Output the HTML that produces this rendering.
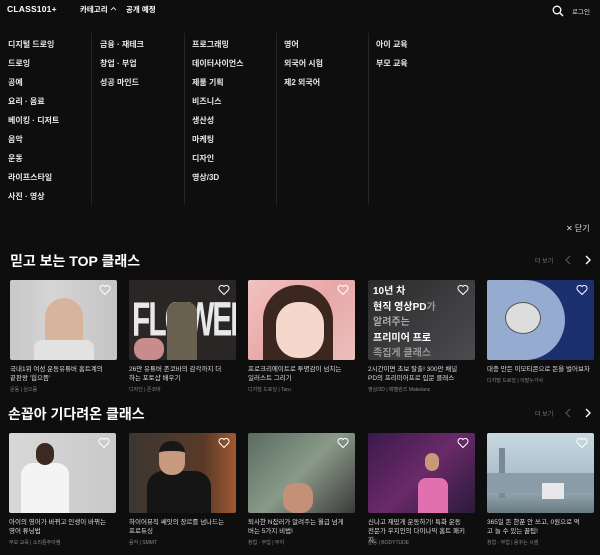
<!DOCTYPE html>
<html><head><meta charset="utf-8"><style>
*{margin:0;padding:0;box-sizing:border-box}
body{width:600px;height:555px;background:#0e0e0f;color:#fff;font-family:"Liberation Sans","Noto Sans CJK KR",sans-serif;position:relative;overflow:hidden}
.a{position:absolute;white-space:nowrap}
.m{font-size:8px;color:#e6e6e6;font-weight:bold}
.div{position:absolute;top:33px;height:172px;width:1px;background:#262628}
.h{font-size:14px;font-weight:bold}
.card{position:absolute;width:107px;height:80px;border-radius:2px;overflow:hidden}
.t{position:absolute;font-size:6.5px;color:#ddd;line-height:9px;width:98px;white-space:normal}
.s{position:absolute;font-size:5px;color:#888;white-space:nowrap}
</style></head><body>
<div class="a" style="left:7px;top:4px;font-size:8.5px;font-weight:bold;letter-spacing:0.2px">CLASS101+</div>
<div class="a" style="left:80px;top:4px;font-size:7.5px;font-weight:bold">카테고리</div>
<svg class="a" style="left:110px;top:6px" width="7" height="5"><path d="M1 4L3.5 1.5 6 4" stroke="#ddd" fill="none" stroke-width="0.9"/></svg>
<div class="a" style="left:126px;top:4px;font-size:7.5px;font-weight:bold">공개 예정</div>
<svg class="a" style="left:552px;top:5px" width="12" height="12" viewBox="0 0 12 12"><circle cx="5" cy="5" r="3.8" stroke="#fff" stroke-width="1.3" fill="none"/><path d="M8 8l3 3" stroke="#fff" stroke-width="1.4"/></svg>
<div class="a" style="left:572px;top:6px;font-size:6.5px;color:#ddd">로그인</div>

<div class="div" style="left:91px"></div><div class="div" style="left:184px"></div><div class="div" style="left:276px"></div><div class="div" style="left:368px"></div>

<div class="a m" style="left:8px;top:35px;line-height:19px">디지털 드로잉<br>드로잉<br>공예<br>요리 · 음료<br>베이킹 · 디저트<br>음악<br>운동<br>라이프스타일<br>사진 · 영상</div>
<div class="a m" style="left:100px;top:35px;line-height:19px">금융 · 재테크<br>창업 · 부업<br>성공 마인드</div>
<div class="a m" style="left:192px;top:35px;line-height:19px">프로그래밍<br>데이터사이언스<br>제품 기획<br>비즈니스<br>생산성<br>마케팅<br>디자인<br>영상/3D</div>
<div class="a m" style="left:284px;top:35px;line-height:19px">영어<br>외국어 시험<br>제2 외국어</div>
<div class="a m" style="left:376px;top:35px;line-height:19px">아이 교육<br>부모 교육</div>
<div class="a" style="left:566px;top:223px;font-size:8px;color:#ddd">✕ 닫기</div>

<div class="a h" style="left:10px;top:251px">믿고 보는 TOP 클래스</div>
<div class="a" style="left:535px;top:256px;font-size:6px;color:#777">더 보기</div>
<svg class="a" style="left:564px;top:255px" width="8" height="10"><path d="M6 1L2 5l4 4" stroke="#555" fill="none" stroke-width="1.2"/></svg>
<svg class="a" style="left:584px;top:255px" width="8" height="10"><path d="M2 1l4 4-4 4" stroke="#fff" fill="none" stroke-width="1.4"/></svg>

<div class="card" style="left:10px;top:280px;background:linear-gradient(90deg,#c8c8ca,#d6d4d4 40%,#c4c4c6)"><div style="position:absolute;left:35px;top:18px;width:38px;height:62px;background:#d9b49c;border-radius:19px 19px 4px 4px"></div><div style="position:absolute;left:24px;top:60px;width:60px;height:20px;background:#e2e2e2;border-radius:8px 8px 0 0"></div></div>
<div class="card" style="left:129px;top:280px;background:#2a2626"><div style="position:absolute;left:3px;top:14px;font:bold 30px 'Liberation Sans';color:#e8e8e8;letter-spacing:-2px;transform:scaleY(1.6);transform-origin:top left">FLOWER</div><div style="position:absolute;left:38px;top:22px;width:30px;height:58px;background:#6a6050;border-radius:10px 10px 0 0"></div><div style="position:absolute;left:5px;top:58px;width:30px;height:22px;background:#c88c8c;border-radius:10px"></div></div>
<div class="card" style="left:248px;top:280px;background:linear-gradient(135deg,#f2c3c0,#e8a8a8 50%,#e9c0bc)"><div style="position:absolute;left:15px;top:5px;width:70px;height:75px;background:#3c2620;border-radius:35px 35px 0 0"></div><div style="position:absolute;left:28px;top:22px;width:48px;height:56px;background:#f6d7cc;border-radius:22px"></div></div>
<div class="card" style="left:368px;top:280px;background:linear-gradient(135deg,#2c2a2a,#4b4b50)"><div style="position:absolute;left:5px;top:4px;font-size:10px;font-weight:bold;line-height:15.5px;color:#fff">10년 차<br>현직 영상PD<span style="color:#999">가</span><br><span style="color:#aaa">알려주는</span><br>프리미어 프로<br><span style="color:#999">족집게 클래스</span></div></div>
<div class="card" style="left:487px;top:280px;background:#1c2f6e"><div style="position:absolute;left:-30px;top:0;width:108px;height:80px;border-radius:0 40px 40px 0;background:#95acd0"></div><div style="position:absolute;left:18px;top:22px;width:36px;height:32px;background:#ddd;border-radius:50%;border:1px solid #555"></div></div>

<div class="t" style="left:10px;top:365px">국내1위 여성 운동유튜버 홈트계의 끝판왕 '힙으뜸'</div><div class="s" style="left:10px;top:386px">운동 | 심으뜸</div>
<div class="t" style="left:129px;top:365px">26만 유튜버 존코바의 감각까지 더하는 포토샵 배우기</div><div class="s" style="left:129px;top:386px">디자인 | 존코바</div>
<div class="t" style="left:248px;top:365px">프로크리에이트로 투명감이 넘치는 일러스트 그리기</div><div class="s" style="left:248px;top:386px">디지털 드로잉 | Taru</div>
<div class="t" style="left:368px;top:365px">2시간이면 초보 탈출! 300만 채널 PD의 프리미어프로 입문 클래스</div><div class="s" style="left:368px;top:386px">영상/3D | 메켈란즈 Makelanz</div>
<div class="t" style="left:487px;top:365px;width:110px">대충 만든 이모티콘으로 돈을 벌어보자</div><div class="s" style="left:487px;top:377px">디지털 드로잉 | 이말누가사</div>

<div class="a h" style="left:8px;top:404px">손꼽아 기다려온 클래스</div>
<div class="a" style="left:535px;top:409px;font-size:6px;color:#777">더 보기</div>
<svg class="a" style="left:564px;top:408px" width="8" height="10"><path d="M6 1L2 5l4 4" stroke="#555" fill="none" stroke-width="1.2"/></svg>
<svg class="a" style="left:584px;top:408px" width="8" height="10"><path d="M2 1l4 4-4 4" stroke="#fff" fill="none" stroke-width="1.4"/></svg>

<div class="card" style="left:9px;top:433px;background:linear-gradient(90deg,#d8d8d8,#c9c9c9)"><div style="position:absolute;left:12px;top:30px;width:48px;height:50px;background:#f4f4f4;border-radius:12px 12px 0 0"></div><div style="position:absolute;left:27px;top:10px;width:18px;height:22px;background:#3a2a22;border-radius:9px"></div></div>
<div class="card" style="left:129px;top:433px;background:linear-gradient(90deg,#3a3630,#5a3a28 70%,#a05a30)"><div style="position:absolute;left:18px;top:38px;width:64px;height:42px;background:#151515;border-radius:16px 16px 0 0"></div><div style="position:absolute;left:30px;top:8px;width:26px;height:34px;background:#c79a80;border-radius:12px;border-top:10px solid #181818"></div></div>
<div class="card" style="left:248px;top:433px;background:linear-gradient(135deg,#5a6a60,#8a9a88 50%,#3a3a3a)"><div style="position:absolute;left:35px;top:50px;width:30px;height:30px;background:#c49078;border-radius:12px"></div></div>
<div class="card" style="left:368px;top:433px;background:linear-gradient(135deg,#3a1a4a,#6a2a6a 50%,#2a1a3a)"><div style="position:absolute;left:50px;top:45px;width:30px;height:35px;background:#e070b0;border-radius:8px 8px 0 0"></div><div style="position:absolute;left:57px;top:20px;width:14px;height:18px;background:#c89878;border-radius:7px"></div></div>
<div class="card" style="left:487px;top:433px;background:linear-gradient(180deg,#c8d8e0,#a8bcc8 60%,#6a7a82)"><div style="position:absolute;left:12px;top:15px;width:6px;height:50px;background:#7a8a94"></div><div style="position:absolute;left:0;top:40px;width:107px;height:20px;background:#8a9ca8"></div><div style="position:absolute;left:55px;top:50px;width:22px;height:16px;background:#e8e8ea"></div></div>

<div class="t" style="left:9px;top:518px">아이의 영어가 바뀌고 인생이 바뀌는 영어 튜닝법</div><div class="s" style="left:9px;top:539px">부모 교육 | 소리튠주아쌤</div>
<div class="t" style="left:129px;top:518px">하이어뮤직 쎄잇의 장르를 넘나드는 프로듀싱</div><div class="s" style="left:129px;top:539px">음악 | SMMT</div>
<div class="t" style="left:248px;top:518px">퇴사한 N잡러가 알려주는 월급 넘게 버는 5가지 비법!</div><div class="s" style="left:248px;top:539px">창업 · 부업 | 부지</div>
<div class="t" style="left:368px;top:518px">신나고 재밌게 운동하기! 특화 운동 전문가 우지인의 다이나믹 홈트 패키지</div><div class="s" style="left:368px;top:539px">운동 | BODYTUDE</div>
<div class="t" style="left:487px;top:518px">365일 돈 한푼 안 쓰고, 0원으로 먹고 놀 수 있는 꿀팁!</div><div class="s" style="left:487px;top:539px">창업 · 부업 | 용꾸는 시샘</div>

<svg width="0" height="0" style="position:absolute"><defs><path id="h" d="M6 10.5L1.5 6A2.6 2.6 0 0 1 6 2.6 2.6 2.6 0 0 1 10.5 6z" fill="none" stroke="#fff" stroke-width="1"/></defs></svg>
<svg class="a" style="left:99px;top:284px" width="12" height="12"><use href="#h"/></svg>
<svg class="a" style="left:218px;top:284px" width="12" height="12"><use href="#h"/></svg>
<svg class="a" style="left:337px;top:284px" width="12" height="12"><use href="#h"/></svg>
<svg class="a" style="left:457px;top:284px" width="12" height="12"><use href="#h"/></svg>
<svg class="a" style="left:576px;top:284px" width="12" height="12"><use href="#h"/></svg>
<svg class="a" style="left:98px;top:437px" width="12" height="12"><use href="#h"/></svg>
<svg class="a" style="left:218px;top:437px" width="12" height="12"><use href="#h"/></svg>
<svg class="a" style="left:337px;top:437px" width="12" height="12"><use href="#h"/></svg>
<svg class="a" style="left:457px;top:437px" width="12" height="12"><use href="#h"/></svg>
<svg class="a" style="left:576px;top:437px" width="12" height="12"><use href="#h"/></svg>
</body></html>
